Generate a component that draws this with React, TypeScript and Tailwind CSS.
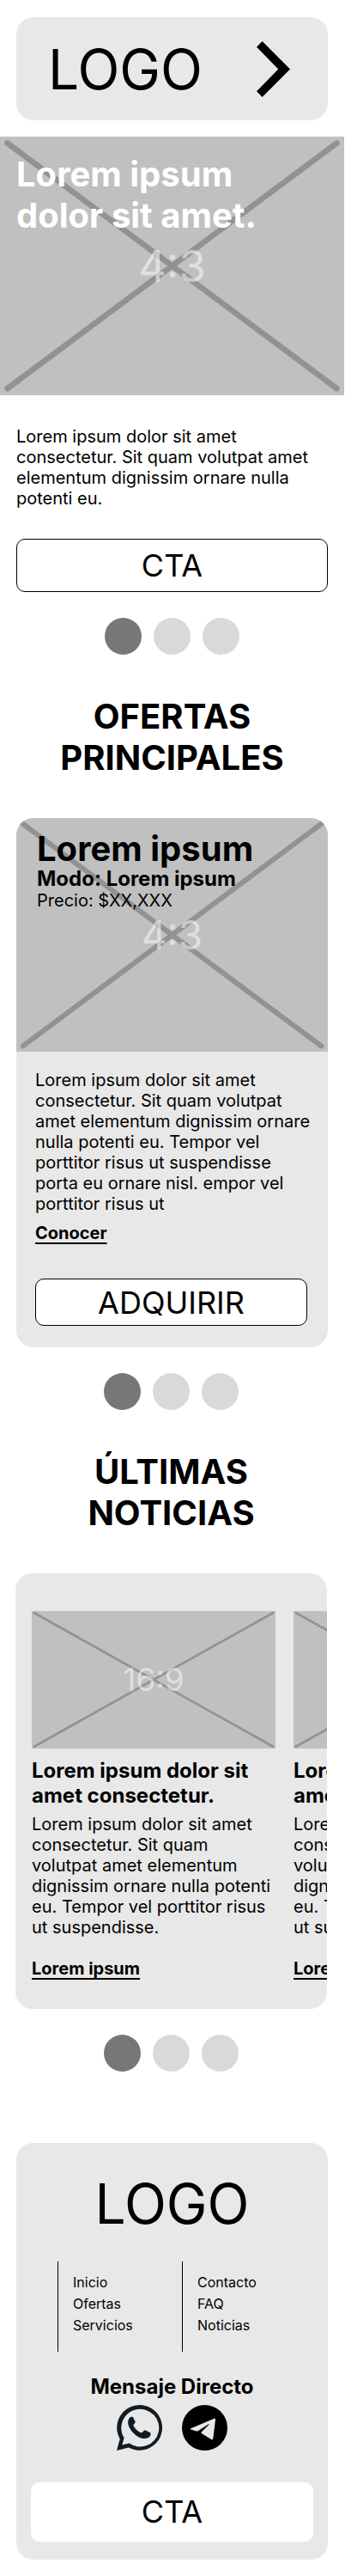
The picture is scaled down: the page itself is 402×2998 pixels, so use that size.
const body =
  'Lorem ipsum dolor sit amet consectetur. Sit quam volutpat amet elementum dignissim ornare nulla potenti eu.';

function Placeholder43({ label }: { label: string }) {
  return (
    <div className="relative aspect-[4/3] w-full bg-[#c0c0c0]">
      <svg viewBox="0 0 400 300" className="block h-full w-full" aria-hidden="true">
        <path
          d="M8.5 7.5 391.5 292.5M391.5 7.5 8.5 292.5"
          stroke="#929292"
          strokeWidth="6.6"
          strokeLinecap="round"
        />
      </svg>
      <span className={`absolute inset-0 flex items-center justify-center leading-none text-white/50 ${label}`}>
        4:3
      </span>
    </div>
  );
}

function Placeholder169({ label }: { label: string }) {
  return (
    <div className="relative aspect-video w-full bg-[#c0c0c0]">
      <svg viewBox="0 0 284 160" className="block h-full w-full" aria-hidden="true">
        <path
          d="M2.5 2 281.5 158M281.5 2 2.5 158"
          stroke="#929292"
          strokeWidth="2.6"
          strokeLinecap="round"
        />
      </svg>
      <span className="absolute inset-0 flex items-center justify-center text-[37px] leading-none text-white/50">
        {label}
      </span>
    </div>
  );
}

function Dots({ name }: { name: string }) {
  return (
    <div className="mt-[30px] flex justify-center gap-3.5">
      {[1, 2, 3].map((n) => (
        <button
          key={n}
          type="button"
          aria-label={`${name} ${n}`}
          className={`size-[43px] rounded-full ${n === 1 ? 'bg-[#787775]' : 'bg-[#d9d9d9]'}`}
        />
      ))}
    </div>
  );
}

function NewsItem() {
  return (
    <article className="w-[284px] shrink-0">
      <Placeholder169 label="16:9" />
      <h3 className="mt-[11px] text-2xl leading-[29px] font-bold">Lorem ipsum dolor sit amet consectetur.</h3>
      <p className="mt-[7px]">{body} Tempor vel porttitor risus ut suspendisse.</p>
      <a href="#noticia" className="mt-6 inline-block font-bold underline underline-offset-4">
        Lorem ipsum
      </a>
    </article>
  );
}

function LinkColumn({ links }: { links: string[] }) {
  return (
    <ul className="flex-1 border-l border-black pt-3 pb-[18px] pl-[17px] text-base leading-[25px]">
      {links.map((l) => (
        <li key={l}>
          <a href={`#${l.toLowerCase()}`}>{l}</a>
        </li>
      ))}
    </ul>
  );
}

export default function App() {
  return (
    <div className="overflow-x-hidden bg-white pt-5 pb-[19px] font-['Inter',sans-serif] text-xl leading-6 text-black">
      <header className="mr-5 ml-[19px] flex h-[120px] items-center justify-between rounded-[20px] bg-[#e8e8e8] pr-11 pl-[37px]">
        <a href="#inicio" className="text-[64px] leading-[77px]">
          LOGO
        </a>
        <button type="button" aria-label="Abrir menú">
          <svg width="39" height="65" viewBox="0 0 39 65" aria-hidden="true">
            <path d="M6.6 0 39 32.5 6.6 65 0 58.2 25.3 32.5 0 6.8Z" />
          </svg>
        </button>
      </header>

      <section className="mt-[19px]">
        <div className="relative mr-px">
          <Placeholder43 label="text-[51px]" />
          <h1 className="absolute top-0 left-0 w-[340px] pt-5 pl-[19px] text-[40px] leading-[48px] font-bold text-white">
            Lorem ipsum dolor sit amet.
          </h1>
        </div>
        <div className="mt-9 mr-5 ml-[19px]">
          <p>{body}</p>
          <button
            type="button"
            className="mt-[35px] h-[62px] w-full rounded-[10px] border border-black bg-white text-4xl"
          >
            CTA
          </button>
          <Dots name="Destacado" />
        </div>
      </section>

      <section className="mt-12 mr-5 ml-[19px]">
        <h2 className="text-center text-[40px] leading-[48px] font-bold">
          OFERTAS
          <br />
          PRINCIPALES
        </h2>
        <article className="mt-[46px] overflow-hidden rounded-[20px] bg-[#e8e8e8] pb-[25px]">
          <div className="relative">
            <Placeholder43 label="text-[46px]" />
            <div className="absolute inset-x-0 top-0 pt-3.5 pl-6">
              <h3 className="text-[40px] leading-[44px] font-bold">Lorem ipsum</h3>
              <p className="text-2xl leading-[26px] font-bold">Modo: Lorem ipsum</p>
              <p>Precio: $XX,XXX</p>
            </div>
          </div>
          <div className="pt-[21px] pr-5 pl-[22px]">
            <p>{body} Tempor vel porttitor risus ut suspendisse porta eu ornare nisl. empor vel porttitor risus ut</p>
            <a href="#conocer" className="mt-2.5 inline-block font-bold underline underline-offset-4">
              Conocer
            </a>
          </div>
          <div className="mt-[41px] pr-6 pl-[22px]">
            <button
              type="button"
              className="h-[55px] w-full rounded-[10px] border border-black bg-white text-4xl"
            >
              ADQUIRIR
            </button>
          </div>
        </article>
      </section>

      <section className="mr-[21px] ml-[18px]">
        <Dots name="Oferta" />
        <h2 className="mt-12 text-center text-[40px] leading-[48px] font-bold">
          ÚLTIMAS
          <br />
          NOTICIAS
        </h2>
        <div className="mt-[46px] flex gap-[21px] overflow-hidden rounded-[20px] bg-[#e8e8e8] pt-11 pb-[35px] pl-[19px]">
          <NewsItem />
          <NewsItem />
        </div>
        <Dots name="Noticia" />
      </section>

      <footer className="mt-[83px] mr-5 ml-[19px] rounded-[20px] bg-[#e8e8e8] pt-8 pb-[21px]">
        <p className="text-center text-[64px] leading-[77px]">LOGO</p>
        <nav className="mt-[29px] ml-12 flex pr-[25px]">
          <LinkColumn links={['Inicio', 'Ofertas', 'Servicios']} />
          <LinkColumn links={['Contacto', 'FAQ', 'Noticias']} />
        </nav>
        <h3 className="mt-[26px] text-center text-2xl leading-[29px] font-bold">Mensaje Directo</h3>
        <div className="mt-[7px] flex justify-center gap-[23px]">
          <a href="#whatsapp" aria-label="WhatsApp">
            <svg width="53" height="53" viewBox="0 0 53 53" fill="#111b21" aria-hidden="true">
              <path
                fillRule="evenodd"
                d="M0 53 3.7 39.4A26.4 26.3 0 1 1 13.9 49.4ZM6.3 46.6 14.6 44.6A22 21.9 0 1 0 8.6 38.3Z"
              />
              <path d="M15.7 14.3C16.6 13.8 18.6 13.6 19.2 14.4L21.7 19.6C22 20.8 19.6 22.4 19.4 23.4C20.2 26.4 25.2 31.4 28.9 32.3C30.2 32 31.8 29.2 33 29.3L38.8 32C40.2 32.8 39.6 35.4 38.6 36.6C36.5 38.9 33.2 39.5 29.8 38.9C23.2 37.2 17 31.4 14.2 25C12.6 21 12.9 16.6 15.7 14.3Z" />
            </svg>
          </a>
          <a href="#telegram" aria-label="Telegram">
            <svg width="53" height="53" viewBox="0 0 53 53" aria-hidden="true">
              <circle cx="26.5" cy="26.5" r="26.5" />
              <path
                fill="#e8e8e8"
                d="M10.4 27.2 37.6 15.8C38.6 15.5 39.1 16 39 17L36.3 39.2C36.1 40.4 35.2 40.6 34.2 40L23.2 33.2C22.2 32.5 22.4 31.8 23.1 31L31.4 22.9C31.9 22.2 31.4 21.9 30.6 22.4L19.8 29.6C18.5 30.5 17.4 30.6 16 30.2L10.5 28.5C9.6 28.2 9.6 27.6 10.4 27.2Z"
              />
            </svg>
          </a>
        </div>
        <div className="mt-[37px] px-[17px]">
          <button type="button" className="h-[69px] w-full rounded-[10px] bg-white text-4xl">
            CTA
          </button>
        </div>
      </footer>
    </div>
  );
}
